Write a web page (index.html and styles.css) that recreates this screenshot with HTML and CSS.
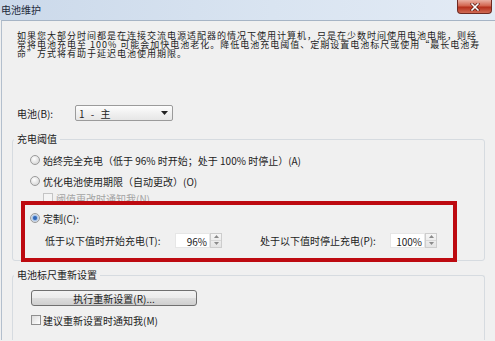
FILE: index.html
```html
<!DOCTYPE html>
<html lang="zh-CN">
<head>
    <meta charset="UTF-8">
    <meta name="viewport" content="width=device-width, initial-scale=1.0">
    <title>电池维护</title>
<link rel="stylesheet" href="styles.css">
</head>
<body>
    <div class="titlebar">
        <span class="title">电池维护</span>
        <div class="closeBtn">
            <svg width="10" height="8" viewBox="0 0 10 8">
                <path d="M2 1 L8 7 M8 1 L2 7" stroke="#5a1a12" stroke-width="3" stroke-linecap="square"/>
                <path d="M2 1 L8 7 M8 1 L2 7" stroke="#ffffff" stroke-width="1.6" stroke-linecap="square"/>
            </svg>
        </div>
    </div>

    <div class="content">
        <!-- intro text -->
        <p class="intro">如果您大部分时间都是在连接交流电源适配器的情况下使用计算机，只是在少数时间使用电池电能，则经<br>常将电池充电至 100% 可能会加快电池老化。降低电池充电阈值、定期设置电池标尺或使用“最长电池寿<br>命”方式将有助于延迟电池使用期限。</p>

        <div class="batteryRow">
            <span class="batteryLabel">电池(B):</span>
            <div class="select">
                <span class="selectText">1 - 主</span>
                <svg width="7" height="4" viewBox="0 0 7 4"><path d="M0 0 H7 L3.5 4 Z" fill="#222"/></svg>
            </div>
        </div>

        <!-- charge threshold -->
        <fieldset class="group">
            <legend>充电阈值</legend>
            <div class="option row1">
                <span class="radio"></span>
                <span>始终完全充电（低于 96% 时开始；处于 100% 时停止）(A)</span>
            </div>
            <div class="option row2">
                <span class="radio"></span>
                <span>优化电池使用期限（自动更改）(O)</span>
            </div>
            <div class="option rowCheck disabled">
                <span class="checkbox grayed"></span>
                <span>阈值更改时通知我(N)</span>
            </div>
            <div class="option row3">
                <span class="radio checked"></span>
                <span>定制(C):</span>
            </div>
            <div class="spinRow">
                <span class="spinLabel">低于以下值时开始充电(T):</span>
                <div class="spin">
                    <span class="spinVal">96%</span>
                    <div class="spinArrows">
                        <span><svg width="5" height="3" viewBox="0 0 5 3"><path d="M0 3 H5 L2.5 0 Z" fill="#8a8a8a"/></svg></span>
                        <span><svg width="5" height="3" viewBox="0 0 5 3"><path d="M0 0 H5 L2.5 3 Z" fill="#8a8a8a"/></svg></span>
                    </div>
                </div>
                <span class="spinLabel second">处于以下值时停止充电(P):</span>
                <div class="spin">
                    <span class="spinVal">100%</span>
                    <div class="spinArrows">
                        <span><svg width="5" height="3" viewBox="0 0 5 3"><path d="M0 3 H5 L2.5 0 Z" fill="#8a8a8a"/></svg></span>
                        <span><svg width="5" height="3" viewBox="0 0 5 3"><path d="M0 0 H5 L2.5 3 Z" fill="#8a8a8a"/></svg></span>
                    </div>
                </div>
            </div>
        </fieldset>

        <!-- calibration -->
        <fieldset class="group calib">
            <legend>电池标尺重新设置</legend>
            <button class="resetBtn">执行重新设置(R)...</button>
            <div class="option rowNotify">
                <span class="checkbox"></span>
                <span>建议重新设置时通知我(M)</span>
            </div>
        </fieldset>
    </div>

    <!-- red highlight drawn over the dialog -->
    <div class="highlight"></div>
</body>
</html>
```

FILE: styles.css
```css
* {
    box-sizing: border-box;
}
body {
    margin: 0;
    width: 495px;
    height: 341px;
    overflow: hidden;
    position: relative;
    background: #f0f0f0;
    color: #1c1c1c;
    font-family: "Noto Sans CJK SC", "Liberation Sans", sans-serif;
    font-size: 10px;
}
.titlebar {
    height: 20px;
    display: flex;
    justify-content: space-between;
    align-items: flex-start;
    background: linear-gradient(to right, #cbd9ea, #d9e4f1 55%, #e3ebf5);
}
.title {
    padding: 4px 0 0 1px;
    line-height: 12px;
    color: #1d2a3a;
}
.closeBtn {
    width: 35px;
    height: 14px;
    margin-right: 3px;
    border: 1px solid #6e2a22;
    border-top: 0;
    border-radius: 0 0 4px 4px;
    background: linear-gradient(#eab0a3, #d2654f 45%, #b5301c 55%, #d06a54);
    display: flex;
    align-items: center;
    justify-content: center;
}
.content {
    margin-left: 1px;
    height: 320px;
    border-top: 1px solid #a6b4c5;
    border-left: 1px solid #b3bfcd;
}
.intro {
    margin: 10px 0 0 15px;
    font-size: 9px;
    letter-spacing: 1px;
    line-height: 9px;
    white-space: nowrap;
}
.batteryRow {
    margin-top: 47px;
    height: 16px;
    padding-left: 15px;
    display: flex;
    align-items: center;
}
.batteryLabel {
    width: 58px;
}
.select {
    width: 98px;
    height: 16px;
    padding: 0 4px 0 3px;
    border: 1px solid #9b9b9b;
    border-radius: 2px;
    background: linear-gradient(#fdfdfd, #f1f1f1 50%, #e6e6e6);
    display: flex;
    align-items: center;
    justify-content: space-between;
}
.selectText {
    word-spacing: 4px;
}

.group {
    margin: 12px 10px 0 10px;
    padding: 5px 0 12px 0;
    min-width: 0;
    border: 1px solid #d6dbe0;
    border-radius: 3px;
}
.group legend {
    margin-left: 1px;
    padding: 0 3px;
    line-height: 12px;
}
.option {
    display: flex;
    align-items: center;
    gap: 3px;
    margin-left: 17px;
}
.row1 { height: 20px; }
.row2 { height: 22px; }
.rowCheck {
    height: 12px;
    margin-left: 30px;
}
.row3 { height: 28px; }
.disabled {
    color: #a3a3a3;
}
.radio {
    width: 10px;
    height: 10px;
    border-radius: 50%;
    border: 1px solid #9a9a9a;
    background: radial-gradient(circle at 40% 35%, #ffffff, #dcdcdc 70%, #c8c8c8);
}
.radio.checked {
    background: radial-gradient(circle, #2d5fa8 0, #3c74c4 30%, #a9c3e6 45%, #e6e6e6 75%);
}
.checkbox {
    width: 10px;
    height: 10px;
    border: 1px solid #8f8f8f;
    background: linear-gradient(135deg, #dcdcdc, #ffffff);
}
.checkbox.grayed {
    border-color: #c4c4c4;
    background: #f4f4f4;
}

.spinRow {
    height: 16px;
    margin-left: 32px;
    display: flex;
    align-items: center;
}
.spinLabel {
    width: 130px;
}
.spinLabel.second {
    margin-left: 38px;
}
.spin {
    height: 15px;
    display: flex;
}
.spinVal {
    width: 35px;
    height: 15px;
    padding-right: 2px;
    line-height: 15px;
    text-align: right;
    background: #ffffff;
    border: 1px solid #e6e6e6;
}
.spinArrows {
    width: 12px;
    display: flex;
    flex-direction: column;
    border: 1px solid #cdcdcd;
    background: linear-gradient(#f6f6f6, #e4e4e4);
}
.spinArrows span {
    flex: 1;
    display: flex;
    align-items: center;
    justify-content: center;
}
.spinArrows span + span {
    border-top: 1px solid #d8d8d8;
}

.calib {
    margin-top: 8px;
    padding: 9px 0 12px 0;
    border-bottom: none;
    border-radius: 3px 3px 0 0;
}
.resetBtn {
    display: block;
    margin-left: 18px;
    width: 166px;
    height: 16px;
    padding: 0;
    font-family: inherit;
    font-size: 10px;
    color: #1c1c1c;
    border: 1px solid #707070;
    border-radius: 3px;
    background: linear-gradient(#f3f3f3, #ebebeb 50%, #dddddd 51%, #cfcfcf);
}
.rowNotify {
    height: 16px;
    margin-top: 6px;
    margin-left: 18px;
    gap: 2px;
}

.highlight {
    position: absolute;
    left: 21px;
    top: 201px;
    width: 436px;
    height: 61px;
    border: 4px solid #bd0a10;
}
```
